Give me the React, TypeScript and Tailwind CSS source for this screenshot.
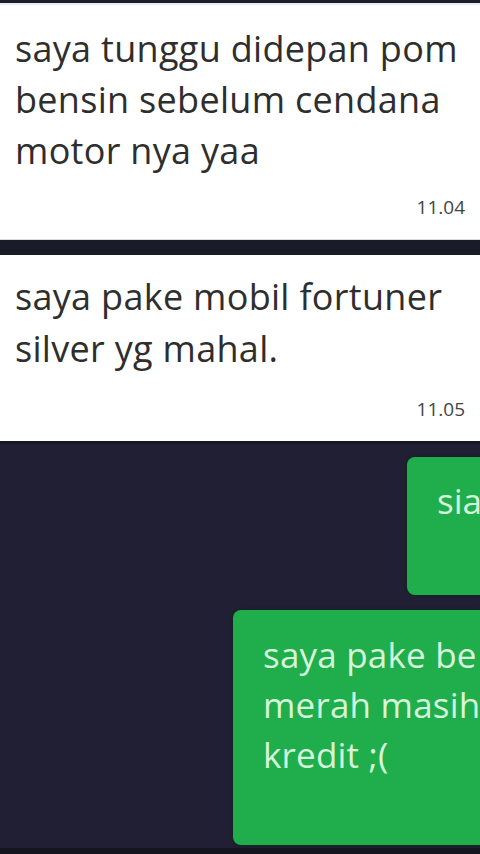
export default function App() {
  const font = { fontFamily: '"Open Sans", "Noto Sans", sans-serif' };
  return (
    <div className="w-[480px] h-[854px] overflow-hidden bg-[#201f33] flex flex-col" style={font}>
      <div className="h-[3px] bg-[#1c1d2b]" />
      <div className="h-[2px] bg-[#e9ebef]" />
      {/* incoming 1 */}
      <div className="bg-white h-[234px] flex flex-col px-[15px] pt-[18px]">
        <p className="text-[36px] leading-[51px] text-[#2e2e2e] tracking-[0.3px]">
          saya tunggu didepan pom
          <br />
          bensin sebelum cendana
          <br />
          motor nya yaa
        </p>
        <span className="mt-auto mb-[22px] self-end text-[19px] leading-[19px] text-[#444]">11.04</span>
      </div>
      <div className="h-[1px] bg-[#d8dae0]" />
      <div className="h-[15px] bg-[#1a1b29]" />
      {/* incoming 2 */}
      <div className="bg-white h-[186px] flex flex-col px-[15px] pt-[16px]">
        <p className="text-[36px] leading-[52px] text-[#2e2e2e] tracking-[0.3px]">
          saya pake mobil fortuner
          <br />
          silver yg mahal.
        </p>
        <span className="mt-auto mb-[22px] self-end text-[19px] leading-[19px] text-[#444]">11.05</span>
      </div>
      <div className="h-[3px] bg-[#171726]" />
      {/* outgoing, cut at the right edge of the screen */}
      <div className="flex flex-col items-end pt-[13px]">
        <div className="w-[73px] h-[138px] bg-[#1fae4b] rounded-l-[8px] pl-[30px] pt-[19px] shadow-[0_0_3px_#0a2a16]">
          <span className="block text-[35px] leading-[50px] text-[#d6f6dc] whitespace-nowrap">sia</span>
        </div>
        <div className="mt-[15px] w-[247px] h-[235px] bg-[#1fae4b] rounded-l-[8px] pl-[30px] pt-[20px] shadow-[0_0_3px_#0a2a16]">
          <p className="text-[35px] leading-[50px] text-[#d6f6dc] tracking-[0.2px] whitespace-nowrap">
            saya pake be
            <br />
            merah masih
            <br />
            kredit ;(
          </p>
        </div>
      </div>
      <div className="mt-auto h-[6px] bg-[#15151f]" />
    </div>
  );
}
